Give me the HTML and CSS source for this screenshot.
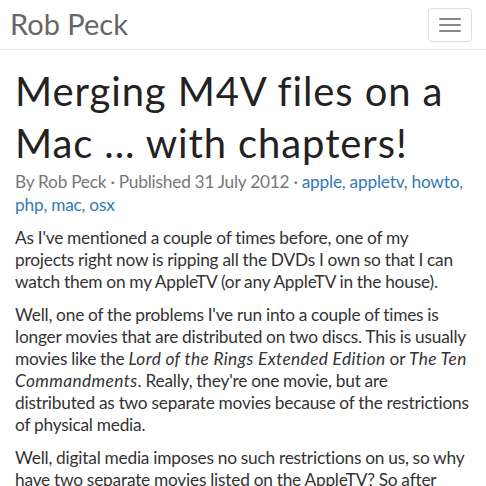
FILE: index.html
```html
<!DOCTYPE html>
<html lang="en">
<head>
<meta charset="utf-8">
<title>Merging M4V files on a Mac ... with chapters! - Rob Peck</title>
<link rel="stylesheet" href="styles.css">
</head>
<body>
<header class="navbar">
  <a class="brand" href="#">Rob Peck</a>
  <button class="toggle" type="button" aria-label="Toggle navigation">
    <span class="bar"></span><span class="bar"></span><span class="bar"></span>
  </button>
</header>
<main class="page">
  <article class="post">
    <h1 class="post-title">Merging M4V files on a Mac ... with chapters!</h1>
    <p class="post-meta">By Rob Peck · Published 31 July 2012 · <a href="#">apple</a>, <a href="#">appletv</a>, <a href="#">howto</a>, <a href="#">php</a>, <a href="#">mac</a>, <a href="#">osx</a></p>
    <p>As I've mentioned a couple of times before, one of my projects right now is ripping all the DVDs I own so that I can watch them on my AppleTV (or any AppleTV in the house).</p>
    <p>Well, one of the problems I've run into a couple of times is longer movies that are distributed on two discs. This is usually movies like the <em>Lord of the Rings Extended Edition</em> or <em>The Ten Commandments</em>. Really, they're one movie, but are distributed as two separate movies because of the restrictions of physical media.</p>
    <p>Well, digital media imposes no such restrictions on us, so why have two separate movies listed on the AppleTV? So after some searching around, I found a way to merge them into a single file, complete with chapters.</p>
  </article>
</main>
</body>
</html>
```
FILE: styles.css
```css
* { box-sizing: border-box; }
html, body { margin: 0; padding: 0; background: #fff; }
body {
  font-family: Lato, "Open Sans", sans-serif;
  font-size: 17.3px;
  line-height: 22px;
  letter-spacing: -0.2px;
  word-spacing: -0.25px;
  color: #333;
}
em { letter-spacing: 0.4px; }
a { color: #337ab7; text-decoration: none; }

.navbar {
  height: 50px;
  border-bottom: 1px solid #e7e7e7;
  display: flex;
  align-items: center;
  justify-content: space-between;
  padding: 0 14px 0 10px;
}
.brand {
  font-family: Lato, sans-serif;
  font-size: 29px;
  line-height: 1.2;
  letter-spacing: 0;
  word-spacing: 0;
  color: #666;
}
.toggle {
  width: 44px;
  height: 34px;
  padding: 9px 10px;
  background: #fff;
  border: 1px solid #ddd;
  border-radius: 4px;
  display: flex;
  flex-direction: column;
  gap: 4px;
  margin: 0;
}
.bar {
  display: block;
  width: 22px;
  height: 2px;
  border-radius: 1px;
  background: #888;
}

.page { padding: 0 15px; }
.post-title {
  margin: 15px 0 1px;
  font-family: Lato, sans-serif;
  font-weight: 400;
  font-size: 40px;
  line-height: 52px;
  letter-spacing: 0.9px;
  word-spacing: 0;
  color: #222;
}
.post p { margin: 0 0 11px; }
.post .post-meta {
  margin: 0 0 11px;
  line-height: 23px;
  color: #777;
}
```
